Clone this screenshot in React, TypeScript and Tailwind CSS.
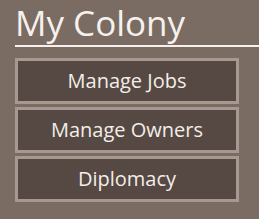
export default function App() {
  const items = ["Manage Jobs", "Manage Owners", "Diplomacy"];
  return (
    <div className="h-[219px] w-[259px] overflow-hidden bg-[#7a6b63] pl-[15px] font-['Open_Sans',sans-serif]">
      <h1 className="h-[45px] text-[35px] leading-[45px] text-[#f6f1ec]">My Colony</h1>
      <div className="h-[2px] w-full bg-[#f6f1ec]" />
      <div className="mt-[11px] flex w-[224px] flex-col gap-[3px]">
        {items.map((label) => (
          <button
            key={label}
            className="h-[46px] border-[3px] border-[#a79890] bg-[#564842] text-[20px] text-[#f3eee9]"
          >
            {label}
          </button>
        ))}
      </div>
    </div>
  );
}
